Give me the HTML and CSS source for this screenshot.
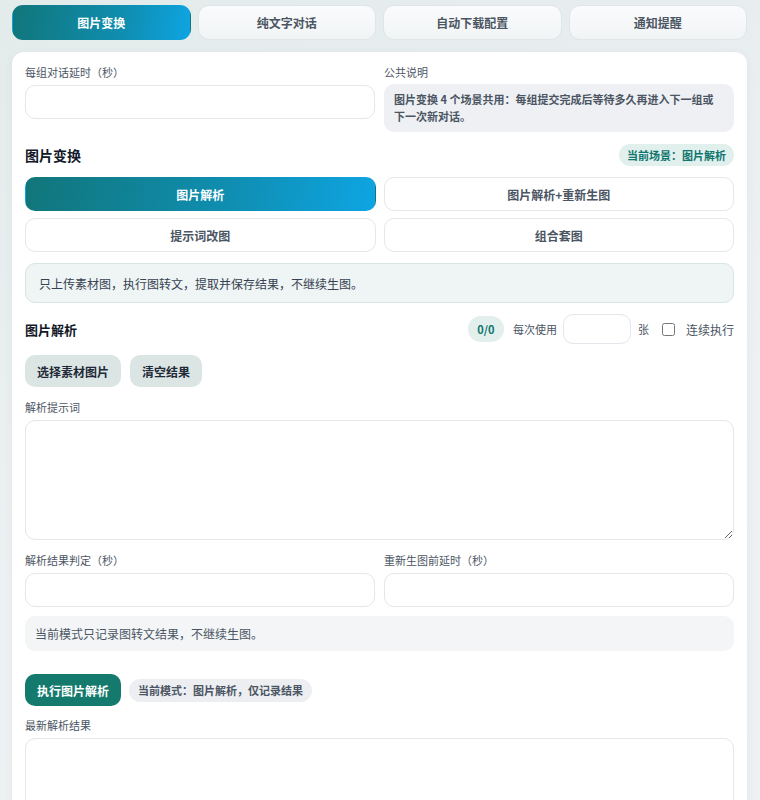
FILE: index.html
```html
<!DOCTYPE html>
<html lang="zh-CN">
<head>
  <meta charset="UTF-8" />
  <meta name="viewport" content="width=device-width, initial-scale=1.0" />
  <title>图片变换</title>
  <link rel="stylesheet" href="styles.css">
</head>
<body>
  <!-- 顶部标签 -->
  <nav class="tabs">
    <a class="tab active">图片变换</a>
    <a class="tab">纯文字对话</a>
    <a class="tab">自动下载配置</a>
    <a class="tab">通知提醒</a>
  </nav>

  <main class="panel">
    <div class="grid-2">
      <div class="field">
        <label class="label">每组对话延时（秒）</label>
        <input class="input" type="text">
      </div>
      <div class="field">
        <label class="label">公共说明</label>
        <div class="note">图片变换 4 个场景共用：每组提交完成后等待多久再进入下一组或下一次新对话。</div>
      </div>
    </div>

    <div class="section-head">
      <h2 class="title">图片变换</h2>
      <span class="badge">当前场景：图片解析</span>
    </div>

    <div class="scenes">
      <button class="scene active">图片解析</button>
      <button class="scene">图片解析+重新生图</button>
      <button class="scene">提示词改图</button>
      <button class="scene">组合套图</button>
    </div>

    <div class="info">只上传素材图，执行图转文，提取并保存结果，不继续生图。</div>

    <div class="analyze-head">
      <h3 class="subtitle">图片解析</h3>
      <div class="analyze-opts">
        <span class="count">0/0</span>
        <span class="small">每次使用</span>
        <input class="input input-sm" type="text">
        <span class="small">张</span>
        <label class="check"><input type="checkbox"><span>连续执行</span></label>
      </div>
    </div>

    <div class="actions">
      <button class="btn-soft">选择素材图片</button>
      <button class="btn-soft">清空结果</button>
    </div>

    <div class="field field-gap">
      <label class="label">解析提示词</label>
      <textarea class="textarea"></textarea>
    </div>

    <div class="grid-2 field-gap">
      <div class="field">
        <label class="label">解析结果判定（秒）</label>
        <input class="input" type="text">
      </div>
      <div class="field">
        <label class="label">重新生图前延时（秒）</label>
        <input class="input" type="text">
      </div>
    </div>

    <div class="hint">当前模式只记录图转文结果，不继续生图。</div>

    <div class="run-row">
      <button class="btn-run">执行图片解析</button>
      <span class="mode">当前模式：图片解析，仅记录结果</span>
    </div>

    <div class="field result">
      <label class="label">最新解析结果</label>
      <textarea class="textarea"></textarea>
    </div>
  </main>
</body>
</html>
```

FILE: styles.css
```css
* {
  margin: 0;
  padding: 0;
  box-sizing: border-box;
}

body {
  height: 800px;
  overflow: hidden;
  padding: 5px 13px 0 12px;
  font-family: "Noto Sans CJK SC", "Noto Sans", sans-serif;
  color: #1f2937;
  background: linear-gradient(160deg, #e3ebeb 0%, #eef1f3 60%, #eef0f2 100%);
}

/* 顶部标签 */
.tabs {
  display: grid;
  grid-template-columns: repeat(4, 1fr);
  gap: 7px;
}
.tab {
  height: 35px;
  display: flex;
  align-items: center;
  justify-content: center;
  font-size: 12px;
  font-weight: 700;
  color: #4b5563;
  border: 1px solid #dfe5e8;
  border-radius: 11px;
  background: linear-gradient(180deg, #fafbfc, #f1f4f5);
}
.tab.active {
  color: #fff;
  border-color: transparent;
  background: linear-gradient(100deg, #11767a 0%, #0f8fb3 65%, #0ea5e3 100%);
}

/* 主面板 */
.panel {
  margin-top: 12px;
  padding: 12px 13px 0;
  height: 760px;
  background: #fff;
  border-radius: 12px;
  box-shadow: 0 2px 10px rgba(30, 60, 70, 0.05);
}

.grid-2 {
  display: grid;
  grid-template-columns: 1fr 1fr;
  gap: 9px;
}
.field {
  display: flex;
  flex-direction: column;
}
.field-gap {
  margin-top: 12px;
}
.label {
  font-size: 11px;
  line-height: 16px;
  color: #4b5563;
  margin-bottom: 5px;
}
.input {
  height: 34px;
  border: 1px solid #e3e6ea;
  border-radius: 10px;
  background: #fff;
  outline: none;
}
.note {
  padding: 7px 10px;
  min-height: 48px;
  font-size: 11px;
  line-height: 17px;
  font-weight: 700;
  color: #4b5563;
  background: #eef0f3;
  border-radius: 10px;
  margin-top: -1px;
}

.section-head {
  margin-top: 12px;
  height: 22px;
  display: flex;
  align-items: center;
  justify-content: space-between;
}
.title {
  font-size: 14px;
  font-weight: 700;
  color: #111827;
}
.badge {
  height: 22px;
  padding: 0 8px;
  display: flex;
  align-items: center;
  font-size: 11px;
  font-weight: 700;
  color: #0f766e;
  background: #e1efed;
  border-radius: 11px;
}

/* 场景按钮 */
.scenes {
  margin-top: 11px;
  display: grid;
  grid-template-columns: 1fr 1fr;
  gap: 7px 8px;
}
.scene {
  height: 34px;
  font-family: inherit;
  font-size: 12px;
  font-weight: 700;
  color: #4b5563;
  background: #fff;
  border: 1px solid #e3e7ea;
  border-radius: 10px;
}
.scene.active {
  color: #fff;
  border-color: transparent;
  background: linear-gradient(100deg, #11767a 0%, #0f8fb3 60%, #0ea5e3 100%);
}

.info {
  margin-top: 11px;
  padding: 0 13px;
  height: 40px;
  display: flex;
  align-items: center;
  font-size: 12px;
  color: #374151;
  background: #eef5f4;
  border: 1px solid #d6e6e3;
  border-radius: 10px;
}

/* 图片解析 */
.analyze-head {
  margin-top: 11px;
  height: 30px;
  display: flex;
  align-items: center;
  justify-content: space-between;
}
.subtitle {
  font-size: 13px;
  font-weight: 700;
  color: #111827;
}
.analyze-opts {
  display: flex;
  align-items: center;
}
.count {
  height: 26px;
  width: 36px;
  display: flex;
  align-items: center;
  justify-content: center;
  font-size: 11px;
  font-weight: 600;
  color: #0f766e;
  background: #e3efed;
  border-radius: 13px;
  margin-right: 9px;
}
.small {
  font-size: 11px;
  color: #4b5563;
}
.input-sm {
  width: 68px;
  height: 30px;
  margin: 0 7px 0 6px;
}
.check {
  display: flex;
  align-items: center;
  margin-left: 13px;
  font-size: 12px;
  color: #4b5563;
}
.check input {
  width: 13px;
  height: 13px;
  margin: 0 11px 0 0;
}

.actions {
  margin-top: 11px;
  display: flex;
  gap: 9px;
}
.btn-soft {
  height: 32px;
  padding: 0 12px;
  font-family: inherit;
  font-size: 12px;
  font-weight: 700;
  color: #1f2937;
  background: #dbe6e4;
  border: none;
  border-radius: 10px;
}

.textarea {
  height: 120px;
  border: 1px solid #e3e6ea;
  border-radius: 10px;
  resize: vertical;
  outline: none;
}

.hint {
  margin-top: 9px;
  height: 35px;
  padding: 0 10px;
  display: flex;
  align-items: center;
  font-size: 12px;
  color: #4b5563;
  background: #f3f5f7;
  border-radius: 10px;
}

.run-row {
  margin-top: 23px;
  display: flex;
  align-items: center;
  gap: 8px;
}
.btn-run {
  height: 32px;
  padding: 0 12px;
  font-family: inherit;
  font-size: 12px;
  font-weight: 700;
  color: #fff;
  background: #137a6d;
  border: none;
  border-radius: 10px;
}
.mode {
  height: 23px;
  padding: 0 9px;
  display: flex;
  align-items: center;
  font-size: 11px;
  font-weight: 700;
  color: #4b5563;
  background: #eceef1;
  border-radius: 12px;
}

.result {
  margin-top: 11px;
}
```
